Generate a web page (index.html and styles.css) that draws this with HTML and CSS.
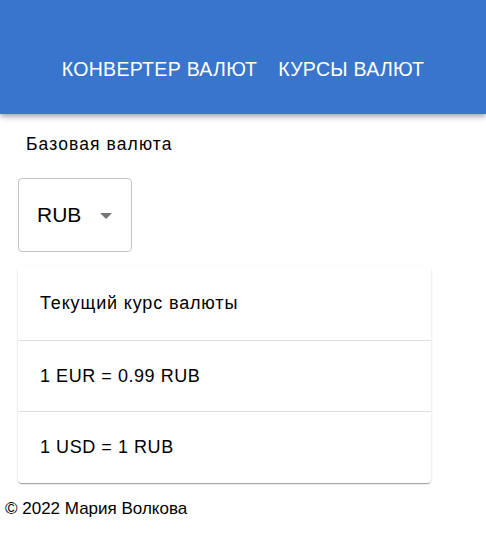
FILE: index.html
```html
<!DOCTYPE html>
<html lang="ru">
<head>
<meta charset="utf-8">
<title>Курсы валют</title>
<link rel="stylesheet" href="styles.css">
</head>
<body>
<header class="appbar">
  <nav class="nav">
    <a class="nav-link">Конвертер валют</a>
    <a class="nav-link">Курсы валют</a>
  </nav>
</header>
<main class="content">
  <div class="label">Базовая валюта</div>
  <div class="select">
    <span class="select-value">RUB</span>
    <svg class="select-arrow" width="12" height="6" viewBox="0 0 12 6"><path d="M0 0 L12 0 L6 6 Z" fill="#757575"/></svg>
  </div>
  <section class="card">
    <div class="row row-head">Текущий курс валюты</div>
    <div class="row">1 EUR = 0.99 RUB</div>
    <div class="row row-last">1 USD = 1 RUB</div>
  </section>
</main>
<footer class="footer">© 2022 Мария Волкова</footer>
</body>
</html>
```

FILE: styles.css
```css
* { box-sizing: border-box; }
body {
  margin: 0;
  font-family: "Liberation Sans", Arial, sans-serif;
  color: #000;
  background: #fff;
}
.appbar {
  height: 114px;
  background: #3975cd;
  display: flex;
  align-items: center;
  justify-content: center;
  box-shadow: 0 2px 4px -1px rgba(0,0,0,0.2), 0 4px 5px 0 rgba(0,0,0,0.14), 0 1px 10px 0 rgba(0,0,0,0.12);
  padding-top: 25px;
}
.nav {
  display: flex;
  gap: 21px;
}
.nav-link {
  color: #fff;
  text-transform: uppercase;
  font-size: 19.5px;
  letter-spacing: 0.3px;
}
.content {
  padding: 0 55px 0 18px;
}
.label {
  margin-top: 20px;
  padding-left: 8px;
  font-size: 17.5px;
  letter-spacing: 1.1px;
  line-height: 20px;
}
.select {
  margin-top: 24px;
  width: 114px;
  height: 74px;
  border: 1px solid #c4c4c4;
  border-radius: 4px;
  display: flex;
  align-items: center;
  padding-left: 18px;
  gap: 19px;
}
.select-value {
  font-size: 21px;
}
.select-arrow { margin-top: 1px; }
.card {
  margin-top: 14px;
  width: 413px;
  border-radius: 4px;
  background: #fff;
  box-shadow: 0 2px 1px -1px rgba(0,0,0,0.2), 0 1px 1px 0 rgba(0,0,0,0.14), 0 1px 3px 0 rgba(0,0,0,0.12);
}
.row {
  height: 70px;
  display: flex;
  align-items: center;
  padding-left: 22px;
  font-size: 18px;
  letter-spacing: 0.55px;
}
.row-head {
  height: 75px;
  letter-spacing: 0.85px;
  border-bottom: 1px solid #e0e0e0;
}
.row-last {
  height: 72px;
  border-top: 1px solid #e0e0e0;
}
.footer {
  margin-top: 16px;
  padding-left: 5px;
  font-size: 17px;
}
```
